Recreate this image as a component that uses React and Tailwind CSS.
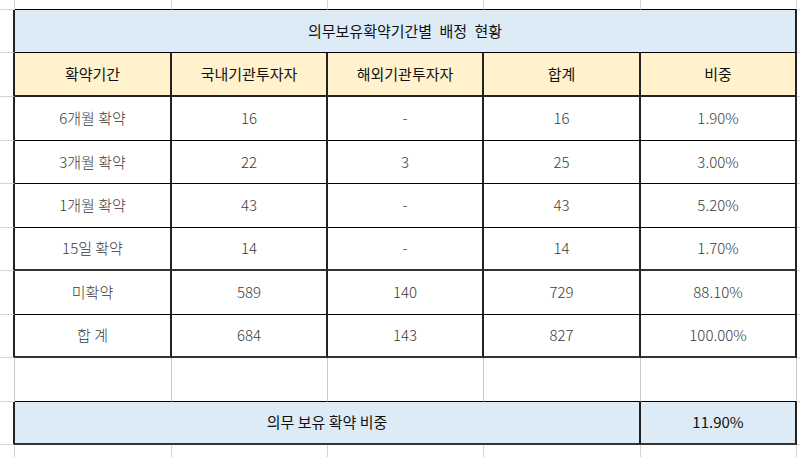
import React from "react";

const FONT = { fontFamily: '"Noto Sans CJK KR", "Noto Sans", sans-serif' };

const colW = ["w-[157px]", "w-[156px]", "w-[156px]", "w-[157px]", "w-[156px]"];

const data = [
  ["6개월 확약", "16", "-", "16", "1.90%", "h-[44px]"],
  ["3개월 확약", "22", "3", "25", "3.00%", "h-[43px]"],
  ["1개월 확약", "43", "-", "43", "5.20%", "h-[44px]"],
  ["15일 확약", "14", "-", "14", "1.70%", "h-[43px]"],
  ["미확약", "589", "140", "729", "88.10%", "h-[44px]"],
  ["합 계", "684", "143", "827", "100.00%", "h-[43px]"],
];

function Margin({ right, bottom }) {
  return (
    <div
      className={`w-[15px] shrink-0 box-border ${right} ${bottom}`}
    />
  );
}

function RightMargin({ bottom }) {
  return <div className={`flex-1 box-border ${bottom}`} />;
}

export default function App() {
  return (
    <div
      className="w-[800px] h-[457px] bg-white overflow-hidden flex flex-col text-[15px]"
      style={FONT}
    >
      {/* top strip */}
      <div className="flex h-[10px] shrink-0">
        <Margin right="border-r border-[#d4d4d4]" bottom="border-b border-b-[#d4d4d4]" />
        {colW.map((w, i) => (
          <div key={i} className={`${w} shrink-0 box-border border-r border-r-[#d4d4d4] border-b border-b-black`} />
        ))}
        <RightMargin bottom="border-b border-[#d4d4d4]" />
      </div>

      {/* title row */}
      <div className="flex h-[43px] shrink-0">
        <Margin right="border-r-2 border-r-[#222]" bottom="border-b border-b-[#d4d4d4]" />
        <div className="w-[782px] shrink-0 box-border bg-[#ddebf7] border-r-2 border-r-[#222] border-b border-b-black flex items-center justify-center text-[#111] [word-spacing:4px]">
          의무보유확약기간별 배정 현황
        </div>
        <RightMargin bottom="border-b border-[#d4d4d4]" />
      </div>

      {/* header row */}
      <div className="flex h-[44px] shrink-0">
        <Margin right="border-r-2 border-r-[#222]" bottom="border-b border-b-[#d4d4d4]" />
        {["확약기간", "국내기관투자자", "해외기관투자자", "합계", "비중"].map((t, i) => (
          <div
            key={i}
            className={`${colW[i]} shrink-0 box-border bg-[#fff2cc] border-r-2 border-r-[#222] border-b-2 border-b-[#222] flex items-center justify-center text-[#111]`}
          >
            {t}
          </div>
        ))}
        <RightMargin bottom="border-b border-[#d4d4d4]" />
      </div>

      {/* data rows */}
      {data.map((r, ri) => (
        <div key={ri} className={`flex ${r[5]} shrink-0`}>
          <Margin right="border-r-2 border-r-[#222]" bottom="border-b border-b-[#d4d4d4]" />
          {r.slice(0, 5).map((t, i) => (
            <div
              key={i}
              className={`${colW[i]} shrink-0 box-border border-r-2 border-r-[#222] ${ri === 3 || ri === 5 ? "border-b-2 border-b-[#333]" : "border-b border-b-black"} flex items-center justify-center text-[#3a3a3a] font-light`}
            >
              {t}
            </div>
          ))}
          <RightMargin bottom="border-b border-[#d4d4d4]" />
        </div>
      ))}

      {/* empty row */}
      <div className="flex h-[44px] shrink-0">
        <Margin right="border-r border-r-[#c8c8c8]" bottom="border-b border-b-[#d4d4d4]" />
        {colW.map((w, i) => (
          <div key={i} className={`${w} shrink-0 box-border border-r border-r-[#c8c8c8] border-b border-b-black`} />
        ))}
        <RightMargin bottom="border-b border-[#d4d4d4]" />
      </div>

      {/* summary row */}
      <div className="flex h-[43px] shrink-0">
        <Margin right="border-r-2 border-r-[#222]" bottom="border-b border-b-[#d4d4d4]" />
        <div className="w-[626px] shrink-0 box-border bg-[#ddebf7] border-r-2 border-r-[#222] border-b-2 border-b-[#333] flex items-center justify-center text-[#111]">
          의무 보유 확약 비중
        </div>
        <div className="w-[156px] shrink-0 box-border bg-[#ddebf7] border-r-2 border-r-[#222] border-b-2 border-b-[#333] flex items-center justify-center text-[#111]">
          11.90%
        </div>
        <RightMargin bottom="border-b border-[#d4d4d4]" />
      </div>

      {/* bottom strip */}
      <div className="flex flex-1">
        <Margin right="border-r border-r-[#d4d4d4]" bottom="" />
        {colW.map((w, i) => (
          <div key={i} className={`${w} shrink-0 box-border border-r border-r-[#d4d4d4]`} />
        ))}
        <RightMargin bottom="" />
      </div>
    </div>
  );
}
